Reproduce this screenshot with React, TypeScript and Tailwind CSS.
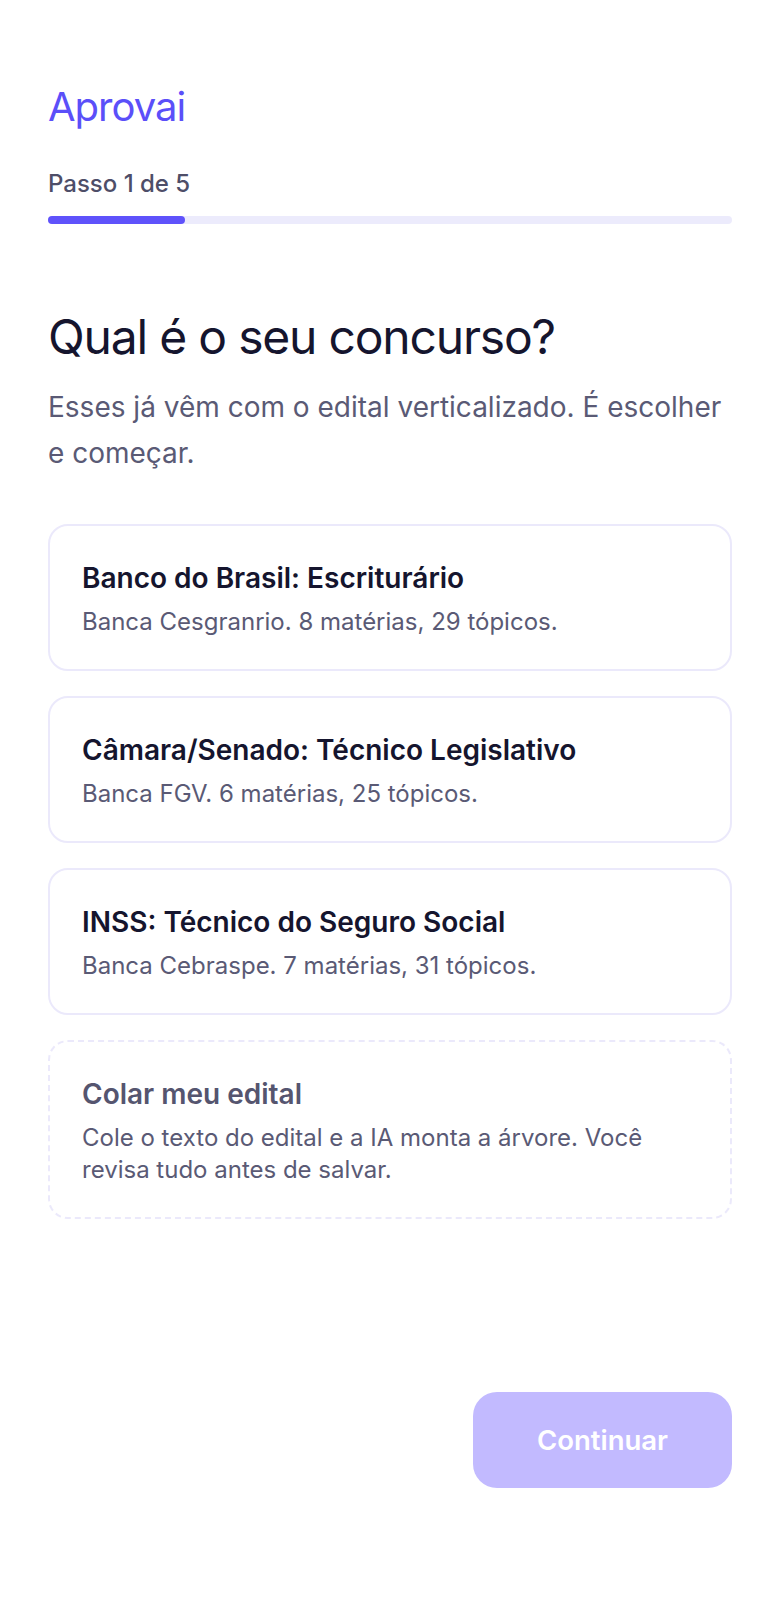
import React from "react";

const cards = [
  { title: "Banco do Brasil: Escriturário", desc: "Banca Cesgranrio. 8 matérias, 29 tópicos." },
  { title: "Câmara/Senado: Técnico Legislativo", desc: "Banca FGV. 6 matérias, 25 tópicos." },
  { title: "INSS: Técnico do Seguro Social", desc: "Banca Cebraspe. 7 matérias, 31 tópicos." },
];

export default function App() {
  return (
    <div
      className="flex h-[1600px] w-full flex-col bg-white px-12 pt-[80px]"
      style={{ fontFamily: "Inter, 'Noto Sans', sans-serif" }}
    >
      <div className="text-[40px] leading-[54px] tracking-tight text-[#5b4ff9]">Aprovai</div>
      <div className="mt-[36px] text-[24px] font-medium leading-[28px] text-[#4e4e68]">Passo 1 de 5</div>
      <div className="mt-[18px] h-2 w-full rounded-full bg-[#ecebfc]">
        <div className="h-2 w-[20%] rounded-full bg-[#5f52fb]" />
      </div>

      <h1 className="mt-[85px] text-[48px] font-normal leading-[56px] tracking-tight text-[#15152e]">
        Qual é o seu concurso?
      </h1>
      <p className="mt-[19px] text-[28px] leading-[46px] text-[#5a5a75]">
        Esses já vêm com o edital verticalizado. É escolher e começar.
      </p>

      <div className="mt-[48px] flex flex-col gap-[25px]">
        {cards.map((c) => (
          <div key={c.title} className="rounded-[20px] border-2 border-[#ebe9fb] bg-white px-8 pb-[31px] pt-[34px]">
            <div className="text-[28px] font-semibold leading-[36px] text-[#15152e]">{c.title}</div>
            <div className="mt-[10px] text-[24px] leading-[32px] text-[#5a5a75]">{c.desc}</div>
          </div>
        ))}
        <div className="rounded-[20px] border-2 border-dashed border-[#ebe9fb] bg-white px-8 pb-[31px] pt-[34px]">
          <div className="text-[28px] font-semibold leading-[36px] text-[#55556f]">Colar meu edital</div>
          <div className="mt-[10px] text-[24px] leading-[32px] text-[#5a5a75]">
            Cole o texto do edital e a IA monta a árvore. Você revisa tudo antes de salvar.
          </div>
        </div>
      </div>

      <div className="flex-1" />
      <div className="flex justify-end pb-[112px]">
        <button className="rounded-[24px] bg-[#c2baff] px-16 py-8 text-[27.5px] font-semibold leading-[32px] text-white">
          Continuar
        </button>
      </div>
    </div>
  );
}
